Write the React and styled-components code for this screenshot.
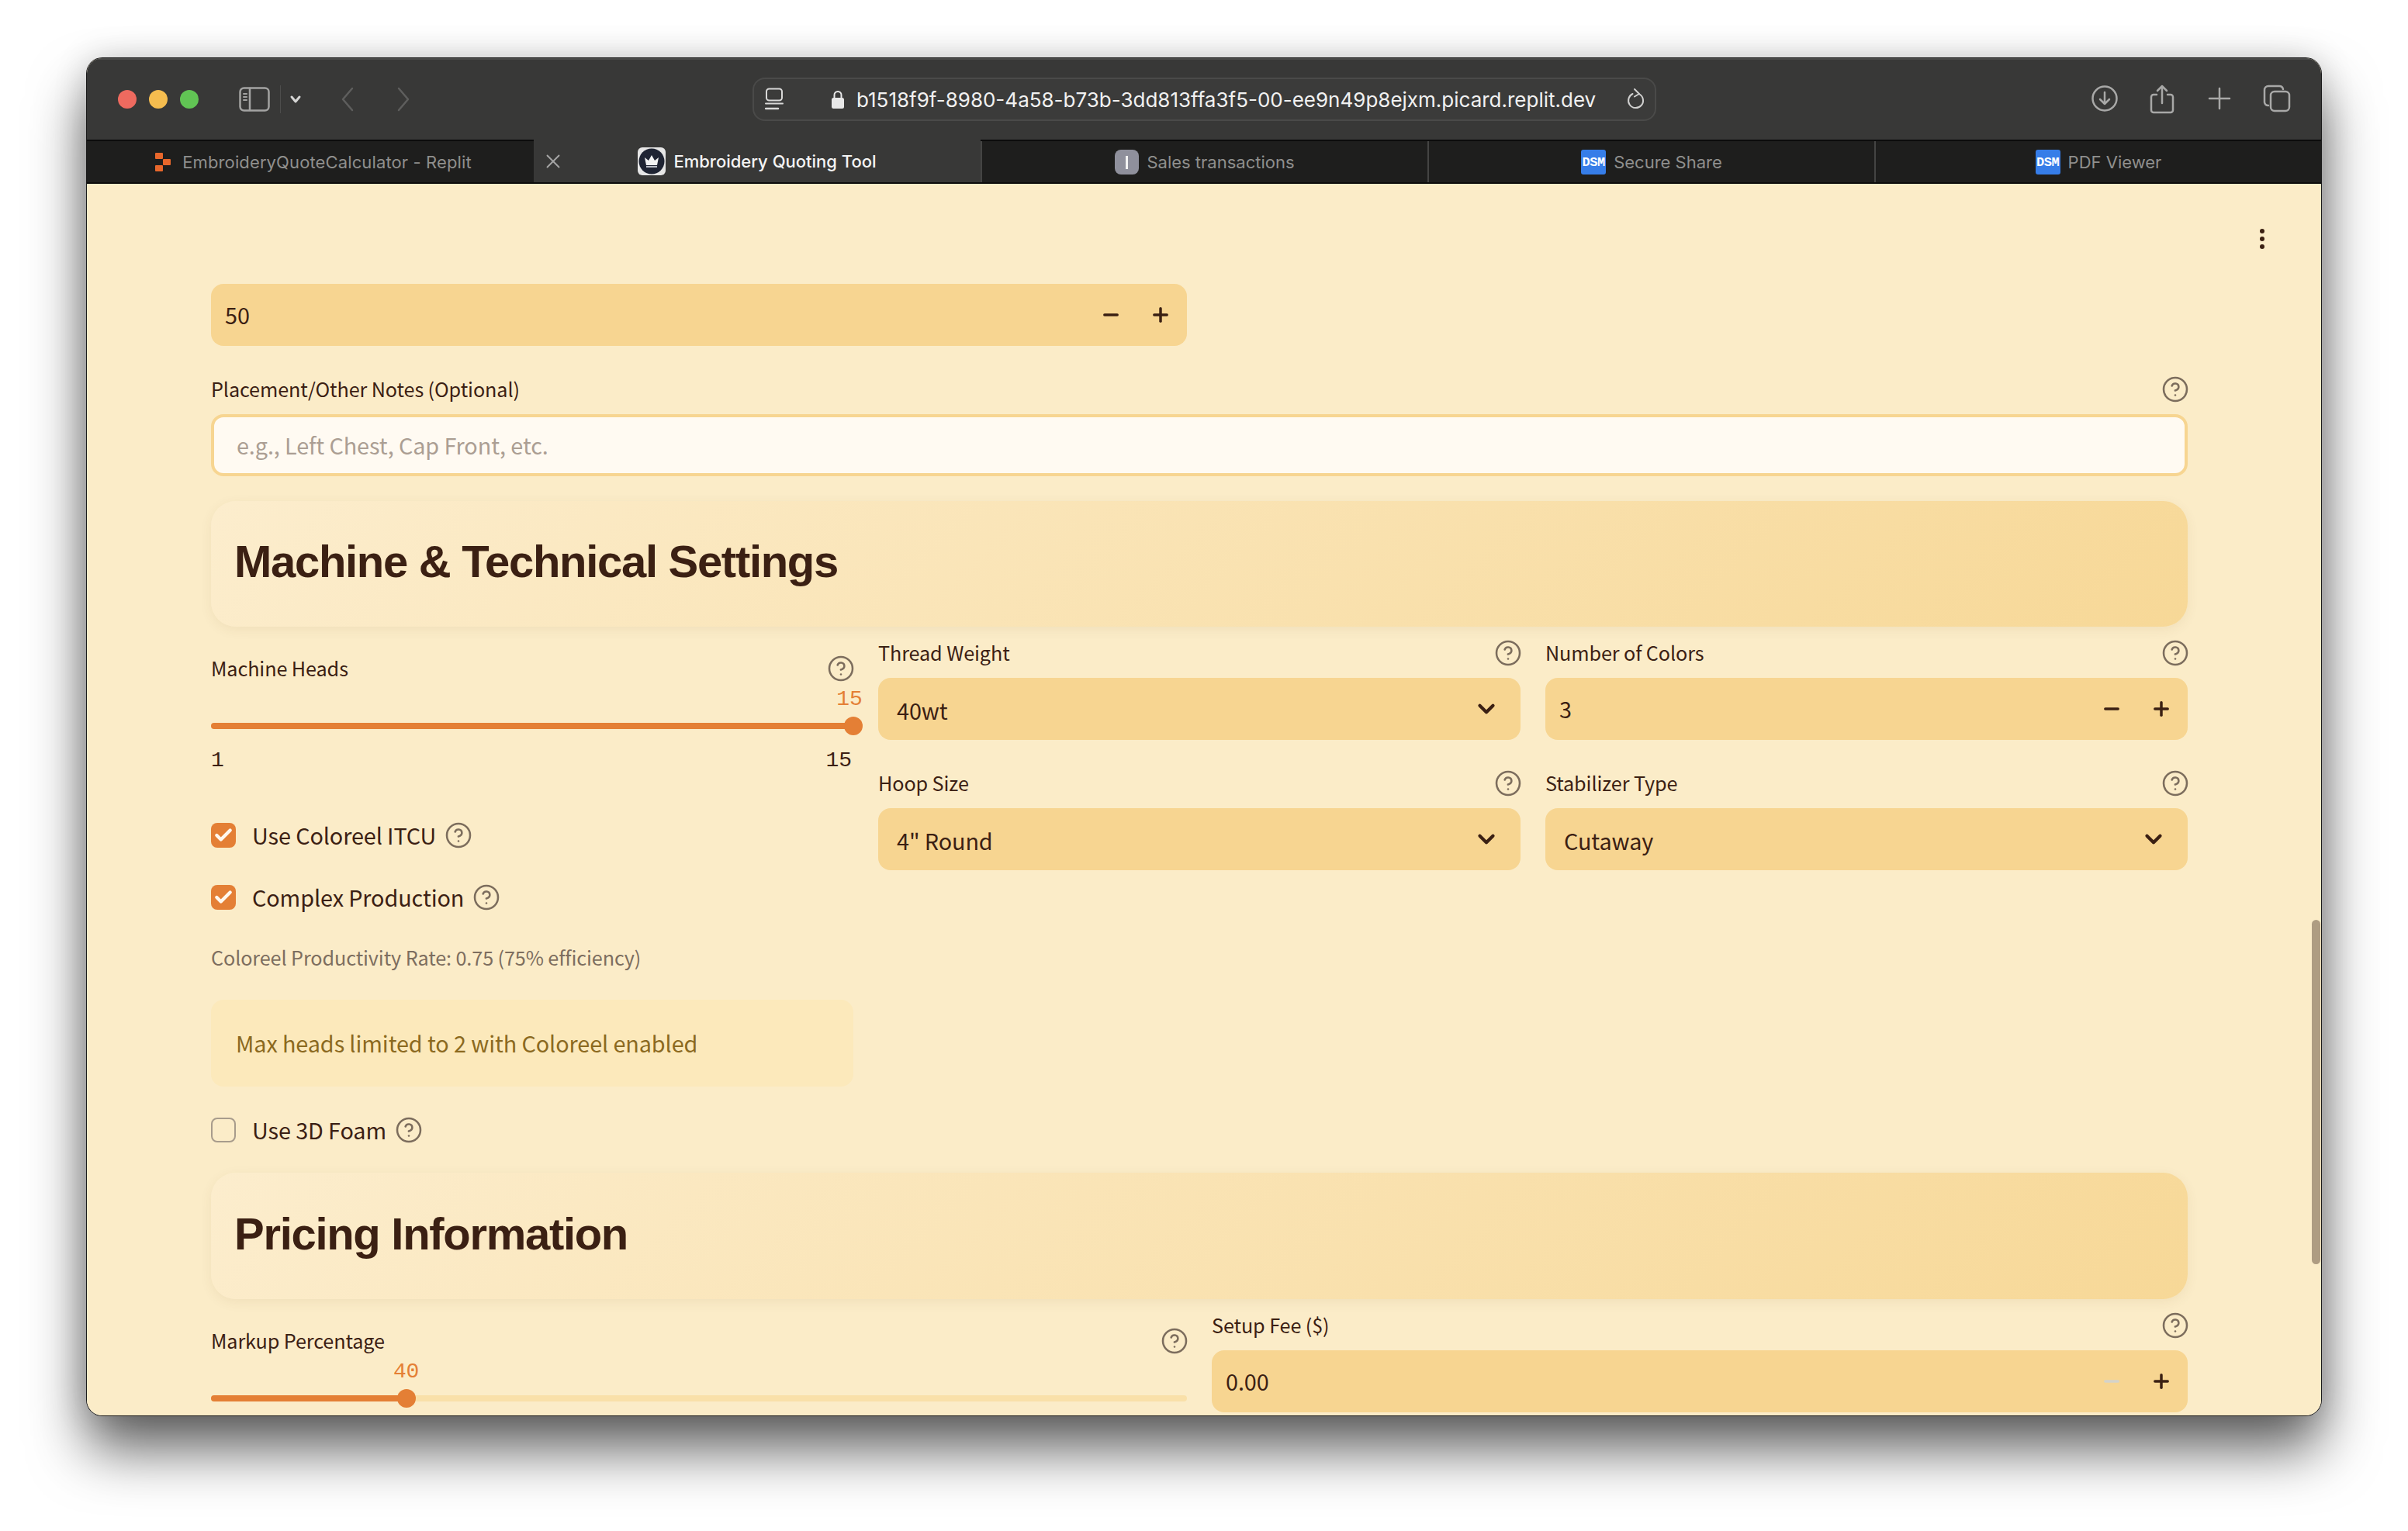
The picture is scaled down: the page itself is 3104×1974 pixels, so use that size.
import React from 'react';
import styled, { createGlobalStyle } from 'styled-components';
import { CircleHelp, ChevronDown, Minus, Plus, X, Check } from 'lucide-react';

const Global = createGlobalStyle`
  html, body { margin: 0; padding: 0; background: #fff; }
  body { width: 3104px; height: 1974px; overflow: hidden; }
  * { box-sizing: border-box; }
`;

const SANS = `"Noto Sans CJK SC", "Source Sans Pro", "Noto Sans", sans-serif`;
const INK = '#3b2013';
const FIELD = '#f7d591';
const ORANGE = '#e47f35';
const PAGE = '#fbecc8';

const Stage = styled.div`
  width: 3104px; height: 1974px; padding: 75px 112px 149px 112px;
`;
const Window = styled.div`
  position: relative;
  width: 100%; height: 100%;
  display: flex; flex-direction: column;
  border-radius: 20px; overflow: hidden;
  background: ${PAGE};
`;
const WindowShadow = styled.div`
  width: 100%; height: 100%;
  border-radius: 20px;
  box-shadow: 0 0 0 1px #1a1a1a, 0 44px 72px rgba(0,0,0,.62), 0 0 44px rgba(0,0,0,.16);
`;
const Toolbar = styled.header`
  flex: none; height: 105px; padding-bottom: 1px;
  display: grid; grid-template-columns: 858px 1165px 1fr; align-items: center;
  background: #383837;
  border-top: 2px solid #4b4b4a;
`;
const ToolLeft = styled.div`
  display: flex; align-items: center; padding-left: 40px;
`;
const Lights = styled.div`display: flex; gap: 16px;`;
const Light = styled.span`
  width: 24px; height: 24px; border-radius: 50%; background: ${p => p.$c};
`;
const ToolIcon = styled.svg`
  flex: none; display: block; margin-left: ${p => p.$ml || 0}px;
  fill: none; stroke: ${p => p.$stroke || '#a8a8a7'}; stroke-width: ${p => p.$sw || 2.5};
  stroke-linecap: round; stroke-linejoin: round;
`;
const ToolDivider = styled.span`
  width: 1px; height: 36px; margin-left: 13px; background: #4d4d4c;
`;
const UrlBar = styled.div`
  height: 56px; display: flex; align-items: center;
  padding: 0 12px 0 14px;
  border: 2px solid #4a4a49; border-radius: 16px;
  background: #3b3b3a;
`;
const UrlText = styled.span`
  margin-left: 15px; flex: 1;
  font: 400 26px "Inter", sans-serif; color: #f1f1f1; white-space: nowrap;
`;
const ToolRight = styled.div`
  display: flex; justify-content: flex-end; gap: 38px; padding-right: 39px;
`;
const TabBar = styled.nav`
  flex: none; height: 57px; display: grid; grid-template-columns: repeat(5, 1fr);
  background: #1e1e1d;
  border-top: 2px solid #0c0c0c; border-bottom: 2px solid #0c0c0c;
`;
const Tab = styled.div`
  position: relative;
  display: flex; align-items: center; justify-content: center; gap: 10px;
  padding-top: 1px;
  background: ${p => p.$active ? '#383837' : 'transparent'};
  border-left: ${p => p.$line ? '2px solid #444443' : 'none'};
  margin-top: ${p => p.$active ? '-2px' : 0};
  font: ${p => p.$active ? 500 : 400} 22px "Inter", sans-serif;
  letter-spacing: ${p => p.$ls || 0}px;
  color: ${p => p.$active ? '#f4f4f4' : '#8f8f8d'};
  white-space: nowrap;
`;
const TabClose = styled.span`
  position: absolute; left: 10px; top: 50%; transform: translateY(-50%);
  display: flex; color: #a5a5a4;
`;
const SalesIcon = styled.span`
  width: 31px; height: 32px; border-radius: 8px; background: #8f909c;
  display: flex; align-items: center; justify-content: center;
  &::before { content: ""; width: 3px; height: 17px; background: #f3f3f3; }
`;
const DsmIcon = styled.span`
  width: 32px; height: 32px; border-radius: 3px; background: #367de8;
  display: flex; align-items: center; justify-content: center;
  font: 700 17px/1 "Liberation Mono", monospace; color: #fff; letter-spacing: -.5px;
`;
const CrownIcon = styled.span`
  width: 36px; height: 36px; border-radius: 6px; background: #e6e6e6;
  display: flex; align-items: center; justify-content: center;
`;
const Content = styled.main`
  flex: 1; min-height: 0; overflow: hidden;
  padding: 129px 172px 0 160px;
  display: flex; flex-direction: column;
  font-family: ${SANS}; color: ${INK};
  letter-spacing: -.1px;
`;
const Kebab = styled.div`
  position: absolute; top: 220px; left: 2801px;
  display: flex; flex-direction: column; gap: 4px;
  & span { width: 6px; height: 6px; border-radius: 50%; background: ${INK}; }
`;
const ScrollThumb = styled.div`
  position: absolute; left: 2868px; top: 1111px; width: 11px; height: 444px;
  border-radius: 6px; background: #ae9c82;
`;
const Half = styled.div`width: 1258px;`;
const LabelRow = styled.div`
  height: 48px; display: flex; align-items: center; justify-content: space-between;
  font-size: 25.2px; line-height: 1; color: ${INK};
`;
const Help = styled(CircleHelp)`
  flex: none; color: #7c6d5d; margin-right: ${p => p.$mr ?? -2}px;
`;
const Field = styled.div`
  display: flex; flex-direction: column; gap: 8px;
`;
const FieldBox = styled.div`
  height: 80px; display: flex; align-items: center;
  padding-left: ${p => p.$pl || 24}px;
  padding-right: ${p => p.$pr || 0}px;
  border-radius: 16px; background: ${FIELD};
  font-size: 28.8px; color: ${INK};
`;
const FieldValue = styled.span`
  flex: 1; line-height: 1; padding-top: ${p => p.$pt ?? 1}px;
`;
const StepButton = styled.span`
  flex: none; width: 64px; display: flex; justify-content: center;
  color: ${p => p.$off ? '#d5d3ca' : INK};
`;
const Stepper = styled.div`display: flex; padding-right: 2px;`;
const NotesInput = styled.div`
  height: 80px; display: flex; align-items: center; padding: 0 29px 2px;
  border: 4px solid ${FIELD}; border-radius: 16px; background: #fffaf2;
  font-size: 28.8px; color: #ab9e93;
`;
const Stack = styled.div`
  display: flex; flex-direction: column; gap: 32px;
`;
const SectionHead = styled.section`
  flex: none; height: ${p => p.$h || 162}px; margin-top: ${p => p.$mt || 0}px;
  display: flex; align-items: center; padding: 0 30px 6px;
  border-radius: 32px;
  background: linear-gradient(135deg, #fcedcd 0%, #f7d897 100%);
  box-shadow: 0 4px 16px rgba(100,70,20,.07);
`;
const SectionTitle = styled.h2`
  margin: 0; font: 700 58px/1 "Liberation Sans", sans-serif; color: ${INK};
  letter-spacing: -1.3px;
`;
const Columns = styled.div`
  display: grid; grid-template-columns: ${p => p.$cols}; gap: 32px;
  margin-top: 10px;
`;
const Column = styled.div`
  display: flex; flex-direction: column; padding-top: ${p => p.$pt || 0}px;
`;
const SliderTrack = styled.div`
  position: relative; height: 8px; margin-top: 46px; border-radius: 4px;
  background: #f9e0a9;
`;
const SliderFill = styled.div`
  height: 100%; border-radius: 4px; background: ${ORANGE};
`;
const SliderThumb = styled.span`
  position: absolute; top: -8px; width: 24px; height: 24px; margin-left: -12px;
  border-radius: 50%; background: ${ORANGE};
`;
const SliderValue = styled.span`
  position: absolute; top: -44px; transform: translateX(-50%);
  font: 400 28px/1 "Liberation Mono", monospace; color: ${ORANGE};
`;
const Ticks = styled.div`
  display: flex; justify-content: space-between; margin-top: 25px; padding-right: 2px;
  font: 400 28px/32px "Liberation Mono", monospace; color: ${INK};
`;
const CheckRow = styled.label`
  display: flex; align-items: center; height: 32px;
  margin-top: ${p => p.$mt || 0}px;
  font-size: 28.8px; color: ${INK};
`;
const Box = styled.span`
  flex: none; width: 32px; height: 32px; margin-right: 21px; border-radius: 8px;
  display: flex; align-items: center; justify-content: center;
  background: ${p => p.$on ? ORANGE : 'transparent'};
  border: ${p => p.$on ? 'none' : '2px solid #a89c8c'};
  color: #fff8ef;
`;
const CheckText = styled.span`line-height: 1; padding-top: 1px; margin-right: 11px;`;
const Muted = styled.div`
  margin-top: 45px; font-size: 25.2px; line-height: 32px; color: #7d6e5f;
`;
const Notice = styled.div`
  margin-top: 39px; height: 112px; padding: 0 32px 2px; display: flex; align-items: center;
  border-radius: 16px; background: #fce9bb;
  font-size: 28.8px; color: #8b691f;
`;
const ReplitIcon = styled.svg`
  flex: none; margin: 0 5px 0 8px;
`;

const Q = ({ mr }) => <Help size={36} strokeWidth={1.7} $mr={mr} />;

const NumberField = ({ value, off, pt }) => (
  <FieldBox $pl={18}>
    <FieldValue $pt={pt}>{value}</FieldValue>
    <Stepper>
      <StepButton $off={off}><Minus size={28} strokeWidth={3} /></StepButton>
      <StepButton><Plus size={28} strokeWidth={3} /></StepButton>
    </Stepper>
  </FieldBox>
);

const SelectField = ({ value }) => (
  <FieldBox $pr={12}>
    <FieldValue $pt={4}>{value}</FieldValue>
    <StepButton><ChevronDown size={34} strokeWidth={3} /></StepButton>
  </FieldBox>
);

const Labeled = ({ label, children }) => (
  <Field>
    <LabelRow>{label}<Q /></LabelRow>
    {children}
  </Field>
);

const Slider = ({ value, pct, shift = 0 }) => (
  <SliderTrack>
    <SliderFill style={{ width: `${pct}%` }} />
    <SliderThumb style={{ left: `${pct}%` }} />
    <SliderValue style={{ left: `calc(${pct}% + ${shift}px)` }}>{value}</SliderValue>
  </SliderTrack>
);

const CheckLine = ({ on, mt, children }) => (
  <CheckRow $mt={mt}>
    <Box $on={on}>{on && <Check size={26} strokeWidth={4} />}</Box>
    <CheckText>{children}</CheckText>
    <Q mr={0} />
  </CheckRow>
);

const ReplitMark = () => (
  <ReplitIcon width="20" height="24" viewBox="0 0 20 24">
    <rect x="0" y="0" width="10" height="8" rx="1" fill="#e8672b" />
    <rect x="10" y="8" width="10" height="8" rx="1" fill="#e8672b" />
    <rect x="0" y="16" width="10" height="8" rx="1" fill="#e8672b" />
  </ReplitIcon>
);

const CrownMark = () => (
  <CrownIcon>
    <svg width="34" height="34" viewBox="0 0 34 34">
      <circle cx="17" cy="17" r="16.5" fill="#1f2433" />
      <path d="M8 12l5 4 4-7 4 7 5-4-2 10H10z" fill="#f3f3f3" />
      <path d="M10 23h14v2H10z" fill="#b9bcc4" />
    </svg>
  </CrownIcon>
);

export default function App() {
  return (
    <Stage>
      <Global />
      <WindowShadow>
        <Window>
          <Toolbar>
            <ToolLeft>
              <Lights>
                <Light $c="#ee6a5f" /><Light $c="#f5bd4f" /><Light $c="#61c454" />
              </Lights>
              <ToolIcon $ml={52} width="40" height="32" viewBox="0 0 40 32" $stroke="#a3a3a2">
                <rect x="1.5" y="1.5" width="37" height="29" rx="5" />
                <path d="M14 2v28" />
                <path d="M6 9h4M6 13h4M6 17h4" strokeWidth="2" />
              </ToolIcon>
              <ToolDivider />
              <ToolIcon $ml={11} width="16" height="12" viewBox="0 0 16 12" $stroke="#d5d5d4" $sw={3}>
                <path d="M3 3l5 6 5-6" />
              </ToolIcon>
              <ToolIcon $ml={49} width="20" height="32" viewBox="0 0 20 32" $stroke="#5e5e5d">
                <path d="M16 2L4 16l12 14" />
              </ToolIcon>
              <ToolIcon $ml={52} width="20" height="32" viewBox="0 0 20 32" $stroke="#5e5e5d">
                <path d="M4 2l12 14L4 30" />
              </ToolIcon>
            </ToolLeft>
            <UrlBar>
              <ToolIcon width="24" height="30" viewBox="0 0 24 30" $stroke="#d8d8d7" $sw={2}>
                <rect x="2" y="1.5" width="20" height="15" rx="3.5" />
                <path d="M1 20.5h22" />
                <path d="M1 27h16" strokeWidth="2.5" />
              </ToolIcon>
              <svg width="18" height="26" viewBox="0 0 18 26" style={{ marginLeft: 61, flex: 'none' }}>
                <path d="M4.5 12V7.5a4.5 4.5 0 0 1 9 0V12" fill="none" stroke="#e8e8e8" strokeWidth="2" />
                <rect x="1" y="11" width="16" height="14" rx="2.5" fill="#e8e8e8" />
              </svg>
              <UrlText>b1518f9f-8980-4a58-b73b-3dd813ffa3f5-00-ee9n49p8ejxm.picard.replit.dev</UrlText>
              <ToolIcon width="24" height="30" viewBox="0 0 24 30" $stroke="#d0d0cf" $sw={2}>
                <path d="M16.5 8.5A9.5 9.5 0 1 1 7.5 8" />
                <path d="M10 2l6 6-6 3.5" />
              </ToolIcon>
            </UrlBar>
            <ToolRight>
              <ToolIcon width="36" height="36" viewBox="0 0 36 36">
                <circle cx="18" cy="18" r="15.5" />
                <path d="M18 10v15M12 19l6 6 6-6" />
              </ToolIcon>
              <ToolIcon width="36" height="38" viewBox="0 0 36 38">
                <path d="M11 13H7a3 3 0 0 0-3 3v17a3 3 0 0 0 3 3h22a3 3 0 0 0 3-3V16a3 3 0 0 0-3-3h-4" />
                <path d="M18 24V2M12 8l6-6 6 6" />
              </ToolIcon>
              <ToolIcon width="36" height="36" viewBox="0 0 36 36">
                <path d="M18 5v26M5 18h26" />
              </ToolIcon>
              <ToolIcon width="36" height="36" viewBox="0 0 36 36">
                <path d="M7 27a5 5 0 0 1-5-4V7a5 5 0 0 1 5-5h14a5 5 0 0 1 5 4" />
                <rect x="10" y="9" width="24" height="25" rx="5" />
              </ToolIcon>
            </ToolRight>
          </Toolbar>
          <TabBar>
            <Tab $ls={0.12}><ReplitMark />EmbroideryQuoteCalculator - Replit</Tab>
            <Tab $active>
              <TabClose><X size={30} strokeWidth={1.5} /></TabClose>
              <CrownMark />Embroidery Quoting Tool
            </Tab>
            <Tab $line><SalesIcon />Sales transactions</Tab>
            <Tab $line><DsmIcon>DSM</DsmIcon>Secure Share</Tab>
            <Tab $line><DsmIcon>DSM</DsmIcon>PDF Viewer</Tab>
          </TabBar>
          <Content>
            <Stack>
              <Half><NumberField value="50" /></Half>
              <Field>
                <LabelRow>Placement/Other Notes (Optional)<Q /></LabelRow>
                <NotesInput>e.g., Left Chest, Cap Front, etc.</NotesInput>
              </Field>
              <SectionHead>
                <SectionTitle>Machine &amp; Technical Settings</SectionTitle>
              </SectionHead>
            </Stack>
            <Columns $cols="828px 828px 828px">
              <Column $pt={20}>
                <LabelRow>Machine Heads<Q /></LabelRow>
                <Slider value="15" pct={100} shift={-5} />
                <Ticks><span>1</span><span>15</span></Ticks>
                <CheckLine on mt={64}>Use Coloreel ITCU</CheckLine>
                <CheckLine on mt={48}>Complex Production</CheckLine>
                <Muted>Coloreel Productivity Rate: 0.75 (75% efficiency)</Muted>
                <Notice>Max heads limited to 2 with Coloreel enabled</Notice>
                <CheckLine mt={40}>Use 3D Foam</CheckLine>
              </Column>
              <Column>
                <Stack>
                  <Labeled label="Thread Weight"><SelectField value="40wt" /></Labeled>
                  <Labeled label="Hoop Size"><SelectField value={'4" Round'} /></Labeled>
                </Stack>
              </Column>
              <Column>
                <Stack>
                  <Labeled label="Number of Colors"><NumberField value="3" /></Labeled>
                  <Labeled label="Stabilizer Type"><SelectField value="Cutaway" /></Labeled>
                </Stack>
              </Column>
            </Columns>
            <SectionHead $mt={39} $h={163}>
              <SectionTitle>Pricing Information</SectionTitle>
            </SectionHead>
            <Columns $cols="1258px 1258px">
              <Column $pt={20}>
                <LabelRow>Markup Percentage<Q /></LabelRow>
                <Slider value="40" pct={20} />
              </Column>
              <Column>
                <Labeled label="Setup Fee ($)"><NumberField value="0.00" off /></Labeled>
              </Column>
            </Columns>
          </Content>
          <Kebab><span /><span /><span /></Kebab>
          <ScrollThumb />
        </Window>
      </WindowShadow>
    </Stage>
  );
}
